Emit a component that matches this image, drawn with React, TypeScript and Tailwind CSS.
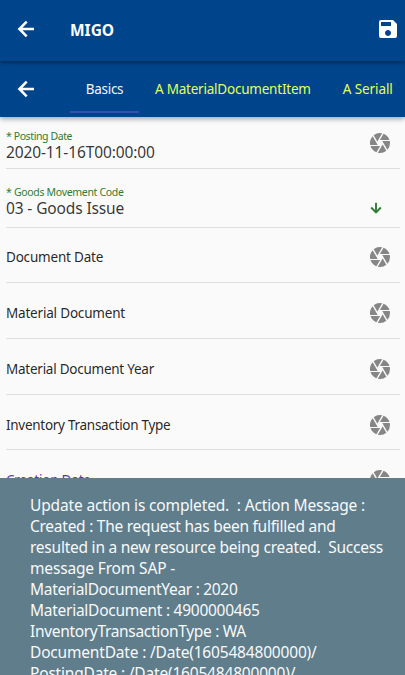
import React from "react";
import { MdCamera, MdSave } from "react-icons/md";

type FieldRow = { label: string; row: string; text: string };

const fields: FieldRow[] = [
  { label: "Document Date", row: "h-[55px] pt-[15px]", text: "text-black/87 tracking-[-0.2px]" },
  { label: "Material Document", row: "h-14 pt-4", text: "text-black/87 tracking-[-0.19px]" },
  { label: "Material Document Year", row: "h-14 pt-4", text: "text-black/87 tracking-[-0.25px]" },
  { label: "Inventory Transaction Type", row: "h-[55px] pt-4", text: "text-black/87 tracking-[-0.28px]" },
  { label: "Creation Date", row: "h-14 pt-4", text: "text-[#5b35ae] tracking-[-0.2px]" },
];

const messageLines: { text: string; tracking: string }[] = [
  { text: "Update action is completed.  : Action Message :", tracking: "tracking-[-0.153px]" },
  { text: "Created : The request has been fulfilled and", tracking: "tracking-[-0.257px]" },
  { text: "resulted in a new resource being created.  Success", tracking: "tracking-[-0.236px]" },
  { text: "message From SAP -", tracking: "tracking-[-0.16px]" },
  { text: "MaterialDocumentYear : 2020", tracking: "tracking-[-0.31px]" },
  { text: "MaterialDocument : 4900000465", tracking: "tracking-[-0.26px]" },
  { text: "InventoryTransactionType : WA", tracking: "tracking-[-0.32px]" },
  { text: "DocumentDate : /Date(1605484800000)/", tracking: "tracking-[-0.18px]" },
  { text: "PostingDate : /Date(1605484800000)/", tracking: "tracking-[-0.19px]" },
];

function ArrowBack({ className }: { className: string }) {
  return (
    <svg viewBox="0 0 24 24" className={className} fill="none" stroke="currentColor" strokeWidth="2.5">
      <path d="M20 12H5.6M12.7 4.7 5.4 12l7.3 7.3" />
    </svg>
  );
}

function ArrowDown({ className }: { className: string }) {
  return (
    <svg viewBox="0 0 24 24" className={className} fill="none" stroke="currentColor" strokeWidth="2.8">
      <path d="M12 4v14.4M4.7 11.3l7.3 7.3 7.3-7.3" />
    </svg>
  );
}

function AppBar() {
  return (
    <header className="relative z-20 flex h-[61px] items-center bg-[#00458b] pl-3.5 pr-[5px] text-white shadow-[0_1px_5px_rgba(0,0,0,0.5)]">
      <ArrowBack className="-mt-[3px] size-6" />
      <h1 className="-mt-0.5 ml-8 text-[15.5px] font-bold leading-6">MIGO</h1>
      <MdSave className="-mt-[3px] ml-auto size-6 shrink-0" />
    </header>
  );
}

function TabBar() {
  return (
    <nav className="relative z-10 flex h-14 items-center overflow-visible bg-[#00458b] pl-3.5 text-[13.5px] whitespace-nowrap text-[#e4ff5c] shadow-[0_2px_5px_rgba(0,0,0,0.35)]">
      <ArrowBack className="size-6 shrink-0 text-white" />
      <div className="ml-8 flex h-full w-[69px] flex-col">
        <span className="flex flex-1 items-center justify-center pt-[7px] tracking-[-0.28px] text-[#f2f7fb]">Basics</span>
        <span className="mb-1 h-0.5 bg-[#3250b4]" />
      </div>
      <span className="ml-4 tracking-[-0.22px]">A MaterialDocumentItem</span>
      <span className="ml-8 tracking-[-0.08px]">A Seriall</span>
    </nav>
  );
}

export default function App() {
  return (
    <div className="relative h-[675px] w-[405px] overflow-hidden bg-[#fafafa] font-['Noto_Sans','Open_Sans',sans-serif]">
      <AppBar />
      <TabBar />
      <main className="pl-1.5 pr-[5px]">
        <div className="flex h-[52px] justify-between border-b border-[#dedede] pt-3 pr-2">
          <div>
            <div className="text-[10.5px] leading-[14px] tracking-[-0.4px] text-[#2e7d32]">* Posting Date</div>
            <div className="text-[15.5px] leading-[18px] tracking-[-0.12px] text-black/80">2020-11-16T00:00:00</div>
          </div>
          <MdCamera className="mt-0.5 size-6 text-[#868686]" />
        </div>
        <div className="flex h-[59px] justify-between border-b border-[#dedede] pt-4 pr-4">
          <div>
            <div className="text-[10.5px] leading-[14px] tracking-[-0.31px] text-[#2e7d32]">* Goods Movement Code</div>
            <div className="text-[15.5px] leading-[18px] tracking-[-0.13px] text-black/80">03 - Goods Issue</div>
          </div>
          <ArrowDown className="mt-[15px] size-4 text-[#2e7d32]" />
        </div>
        {fields.map((f) => (
          <div key={f.label} className={`flex justify-between border-b border-[#dedede] pr-2 ${f.row}`}>
            <span className={`text-[13.5px] leading-7 ${f.text}`}>{f.label}</span>
            <MdCamera className="mt-0.5 size-6 text-[#868686]" />
          </div>
        ))}
      </main>
      <div className="absolute inset-x-0 top-[478px] bottom-0 z-30 overflow-hidden bg-[#607d8b] pt-[17px] pl-[30px] text-[15.5px] leading-[21px] text-[#f7fafb]">
        {messageLines.map((line) => (
          <p key={line.text} className={`whitespace-pre ${line.tracking}`}>{line.text}</p>
        ))}
      </div>
    </div>
  );
}
